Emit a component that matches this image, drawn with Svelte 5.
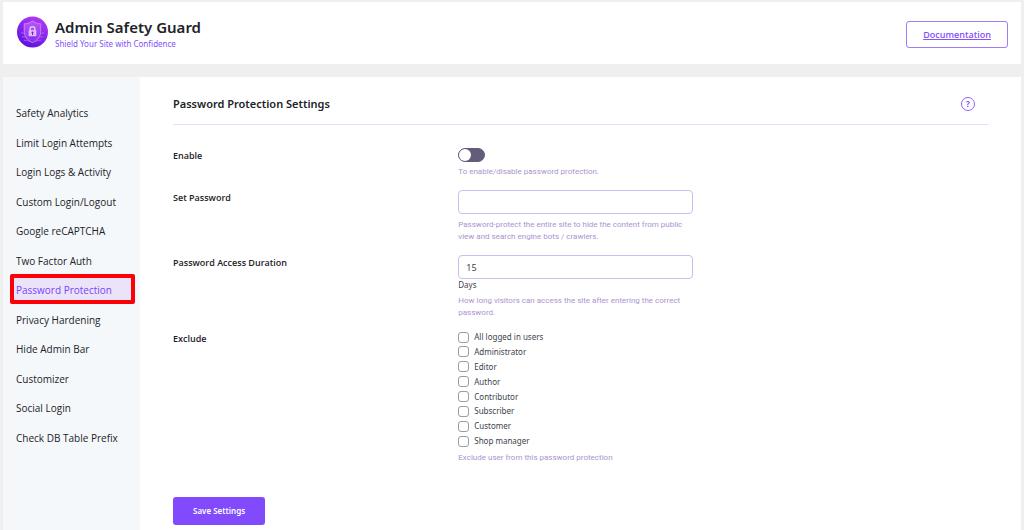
<script lang="ts">
	type Role = { id: string; label: string; checked: boolean };

	const menu = [
		'Safety Analytics',
		'Limit Login Attempts',
		'Login Logs & Activity',
		'Custom Login/Logout',
		'Google reCAPTCHA',
		'Two Factor Auth',
		'Password Protection',
		'Privacy Hardening',
		'Hide Admin Bar',
		'Customizer',
		'Social Login',
		'Check DB Table Prefix'
	];

	let current = $state('Password Protection');
	let enabled = $state(false);
	let password = $state('');
	let duration = $state('15');

	let roles = $state<Role[]>([
		{ id: 'all', label: 'All logged in users', checked: false },
		{ id: 'administrator', label: 'Administrator', checked: false },
		{ id: 'editor', label: 'Editor', checked: false },
		{ id: 'author', label: 'Author', checked: false },
		{ id: 'contributor', label: 'Contributor', checked: false },
		{ id: 'subscriber', label: 'Subscriber', checked: false },
		{ id: 'customer', label: 'Customer', checked: false },
		{ id: 'shop_manager', label: 'Shop manager', checked: false }
	]);

	function select(event: MouseEvent, item: string) {
		event.preventDefault();
		current = item;
	}

	function save(event: SubmitEvent) {
		event.preventDefault();
	}
</script>

<div class="page">
	<header class="topbar">
		<svg class="logo" viewBox="0 0 64 64" aria-hidden="true">
			<defs>
				<linearGradient id="disc" x1="0.8" y1="0" x2="0.3" y2="1">
					<stop offset="0" stop-color="#b43cf5" />
					<stop offset="0.5" stop-color="#8a26ee" />
					<stop offset="1" stop-color="#5a12dc" />
				</linearGradient>
				<linearGradient id="shield" x1="0" y1="0" x2="0" y2="1">
					<stop offset="0" stop-color="#b95cfa" />
					<stop offset="1" stop-color="#8226ec" />
				</linearGradient>
			</defs>
			<circle cx="32" cy="32" r="32" fill="url(#disc)" />
			<g fill="none" stroke="#b878ff" stroke-width="1.5">
				<path d="M8 34h5l6 6M10 42h7l5 5M14 49h8l4 4M56 34h-5l-6 6M54 42h-7l-5 5M50 49h-8l-4 4" />
			</g>
			<path
				d="M32 9c5 4 11 6 17 6v15c0 11-7 19-17 24-10-5-17-13-17-24V15c6 0 12-2 17-6z"
				fill="url(#shield)"
				stroke="#c880fc"
				stroke-width="2"
			/>
			<path
				d="M32 14c4 3 8 4 13 5v11c0 9-5 15-13 19-8-4-13-10-13-19V19c5-1 9-2 13-5z"
				fill="none"
				stroke="#a950f5"
				stroke-width="1"
			/>
			<path d="M27 29v-3a5 5 0 0 1 10 0v3" fill="none" stroke="#e6c4ff" stroke-width="3" />
			<rect x="24" y="28" width="16" height="13" rx="2" fill="#e2b8ff" />
			<circle cx="32" cy="33" r="2" fill="#6a14d8" />
			<path d="M31 34h2v4h-2z" fill="#6a14d8" />
		</svg>
		<div class="brand">
			<h1>Admin Safety Guard</h1>
			<p>Shield Your Site with Confidence</p>
		</div>
		<a class="docs" href="#documentation">Documentation</a>
	</header>

	<div class="panel">
		<nav class="sidebar" aria-label="Settings">
			<ul>
				{#each menu as item (item)}
					<li>
						<a
							href="#settings"
							class:active={item === current}
							aria-current={item === current ? 'page' : undefined}
							onclick={(event) => select(event, item)}
						>
							{item}
						</a>
					</li>
				{/each}
			</ul>
		</nav>

		<main class="content">
			<div class="heading">
				<h2>Password Protection Settings</h2>
				<button type="button" class="help" aria-label="Help">?</button>
			</div>

			<form onsubmit={save}>
				<div class="row">
					<label class="name" for="enable">Enable</label>
					<div class="field">
						<input id="enable" class="switch" type="checkbox" role="switch" bind:checked={enabled} />
						<p class="hint">To enable/disable password protection.</p>
					</div>
				</div>

				<div class="row">
					<label class="name" for="password">Set Password</label>
					<div class="field">
						<input id="password" class="text" type="password" bind:value={password} />
						<p class="hint">
							Password-protect the entire site to hide the content from public view and search engine
							bots / crawlers.
						</p>
					</div>
				</div>

				<div class="row">
					<label class="name" for="duration">Password Access Duration</label>
					<div class="field">
						<input id="duration" class="text" type="text" inputmode="numeric" bind:value={duration} />
						<span class="unit">Days</span>
						<p class="hint">
							How long visitors can access the site after entering the correct password.
						</p>
					</div>
				</div>

				<div class="row" role="group" aria-labelledby="exclude">
					<span class="name" id="exclude">Exclude</span>
					<div class="field">
						<div class="checks">
							{#each roles as role (role.id)}
								<label class="check">
									<input type="checkbox" bind:checked={role.checked} />
									{role.label}
								</label>
							{/each}
						</div>
						<p class="hint">Exclude user from this password protection</p>
					</div>
				</div>

				<button type="submit" class="save">Save Settings</button>
			</form>
		</main>
	</div>
</div>

<style>
	:global(body) {
		background: #efefef;
	}

	.page {
		box-sizing: border-box;
		display: flex;
		flex-direction: column;
		gap: 13px;
		min-height: 100vh;
		padding: 2px 3px 0;
		font-family: 'Noto Sans', 'Open Sans', sans-serif;
		color: #1d2327;
	}

	h1,
	h2,
	p,
	ul {
		margin: 0;
		padding: 0;
	}

	.topbar {
		display: flex;
		align-items: center;
		gap: 7px;
		padding: 14px 13px 12px 14px;
		background: #fff;
	}

	.logo {
		width: 31px;
		height: 32px;
		margin-bottom: 4px;
	}

	.brand {
		flex: 1;
	}

	h1 {
		font-size: 15px;
		font-weight: 600;
		line-height: 20px;
	}

	.brand p {
		font-size: 8px;
		line-height: 14px;
		color: #8350fc;
	}

	.docs {
		padding: 5px 16px;
		border: 1px solid #a07cf8;
		border-radius: 3px;
		font-family: 'Open Sans', sans-serif;
		font-size: 9px;
		font-weight: 600;
		line-height: 15px;
		color: #8350fc;
	}

	.panel {
		display: flex;
		flex: 1;
		background: #fff;
	}

	.sidebar {
		box-sizing: border-box;
		flex: 0 0 137px;
		padding: 20px 5px 0 7px;
		background: #f4f8fa;
	}

	ul {
		display: grid;
		min-height: 354px;
		list-style: none;
	}

	li {
		display: grid;
	}

	li a {
		padding: 8px 0 0 6px;
		font-family: 'Open Sans', sans-serif;
		font-size: 10px;
		font-weight: 500;
		line-height: 16px;
		color: #1d2327;
		text-decoration: none;
		white-space: nowrap;
	}

	li a.active {
		border-radius: 2px;
		outline: 4px solid #fb0007;
		outline-offset: -4px;
		background: #ebe4f8;
		color: #7a42fc;
	}

	.content {
		flex: 1;
		padding: 15px 33px 4px;
	}

	.heading {
		display: flex;
		align-items: center;
		justify-content: space-between;
		padding: 0 13px 8px 0;
		border-bottom: 1px solid #e4dffa;
	}

	h2 {
		font-size: 11px;
		font-weight: 600;
		line-height: 24px;
	}

	.help {
		width: 14px;
		height: 14px;
		padding: 0;
		border: 1px solid #8f62f8;
		border-radius: 50%;
		background: #fff;
		font: 700 8px/12px 'Noto Sans', sans-serif;
		color: #8350fc;
	}

	.row {
		display: grid;
		grid-template-columns: 35% 1fr;
		margin-bottom: 12px;
	}

	.row:first-child {
		margin-top: 23px;
	}

	.name {
		font-family: 'Open Sans', sans-serif;
		font-size: 9px;
		font-weight: 600;
		line-height: 16px;
	}

	.field {
		max-width: 235px;
	}

	.hint {
		font-family: Roboto, 'Noto Sans', sans-serif;
		font-size: 8px;
		line-height: 12px;
		color: #ab94d0;
	}

	.switch {
		display: flex;
		align-items: center;
		appearance: none;
		box-sizing: border-box;
		width: 27px;
		height: 14px;
		margin: 0 0 4px;
		border: 1px solid #655c7a;
		border-radius: 7px;
		background: #655c7a;
	}

	.switch::before {
		content: '';
		width: 12px;
		height: 12px;
		border-radius: 50%;
		background: #fff;
	}

	.switch:checked {
		justify-content: flex-end;
		border-color: #8350fc;
		background: #8350fc;
	}

	.text {
		box-sizing: border-box;
		display: block;
		width: 100%;
		height: 24px;
		margin: 0;
		padding: 0 7px;
		border: 1px solid #cabdf2;
		border-radius: 4px;
		background: #fff;
		font: 9px 'Noto Sans', sans-serif;
		color: #3c434a;
	}

	.text + .hint {
		margin-top: 5px;
	}

	.unit {
		display: block;
		margin-bottom: 4px;
		font-size: 8px;
		line-height: 12px;
		color: #3c434a;
	}

	.checks {
		display: grid;
		min-height: 119px;
		margin-bottom: 2px;
	}

	.check {
		display: flex;
		align-items: center;
		align-self: start;
		gap: 5px;
		font-size: 8px;
		line-height: 12px;
		color: #3c434a;
	}

	.check input {
		appearance: none;
		box-sizing: border-box;
		width: 11px;
		height: 11px;
		margin: 0;
		border: 1px solid #9a9da1;
		border-radius: 3px;
		background: #fff;
	}

	.check input:checked {
		border-color: #8350fc;
		background: #8350fc;
	}

	.save {
		margin-top: 21px;
		padding: 7px 20px;
		border: 0;
		border-radius: 3px;
		background: #814bfd;
		font: 600 8px/14px 'Noto Sans', sans-serif;
		color: #fff;
	}
</style>
